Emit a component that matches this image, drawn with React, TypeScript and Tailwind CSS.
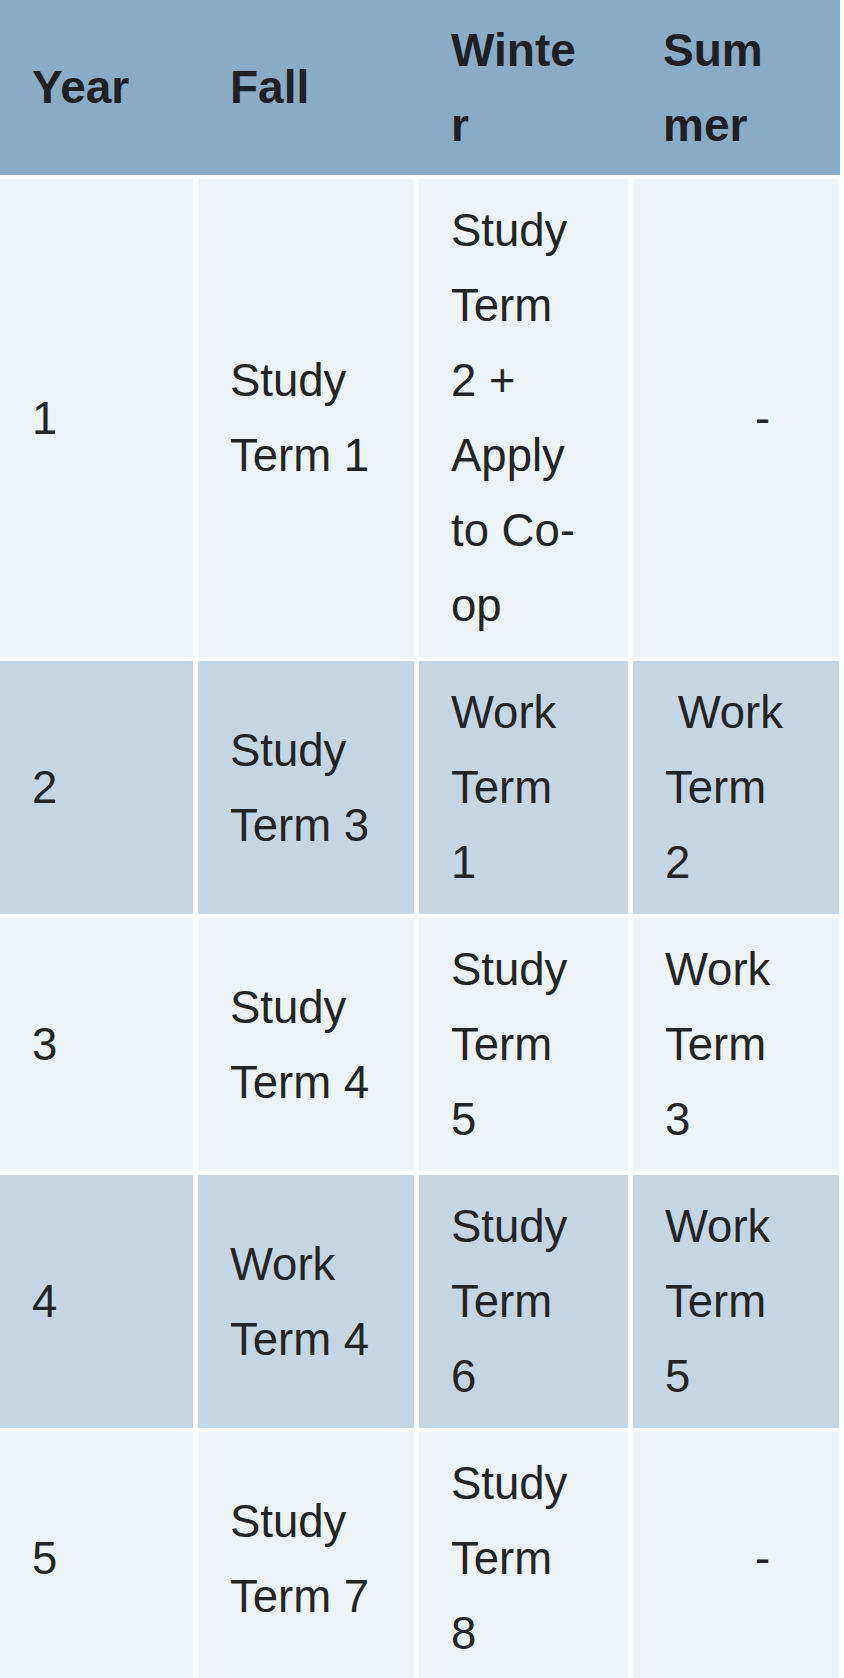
import React from "react";

type Row = { year: string; fall: string[]; winter: string[]; summer: string[] | null; dark: boolean };

const rows: Row[] = [
  { year: "1", fall: ["Study", "Term 1"], winter: ["Study", "Term", "2 +", "Apply", "to Co-", "op"], summer: null, dark: false },
  { year: "2", fall: ["Study", "Term 3"], winter: ["Work", "Term", "1"], summer: ["\u00a0Work", "Term", "2"], dark: true },
  { year: "3", fall: ["Study", "Term 4"], winter: ["Study", "Term", "5"], summer: ["Work", "Term", "3"], dark: false },
  { year: "4", fall: ["Work", "Term 4"], winter: ["Study", "Term", "6"], summer: ["Work", "Term", "5"], dark: true },
  { year: "5", fall: ["Study", "Term 7"], winter: ["Study", "Term", "8"], summer: null, dark: false },
];

function Lines({ lines }: { lines: string[] }) {
  return (
    <div className="flex flex-col">
      {lines.map((l, i) => (
        <span key={i} className="whitespace-pre">{l}</span>
      ))}
    </div>
  );
}

export default function App() {
  return (
    <div
      className="w-[844px] bg-white text-[45.5px] leading-[75px] text-[#222426]"
      style={{ fontFamily: '"Liberation Sans", Arial, sans-serif' }}
    >
      <div className="flex w-[840px] flex-col gap-y-[4px]">
        <div className="grid h-[175px] grid-cols-[193px_216px_209px_206px] gap-x-[5px] bg-[#8aabc6] text-[46px] font-bold text-[#1d2126]">
          <div className="flex items-center pl-[32px]">Year</div>
          <div className="flex items-center pl-[32px]">Fall</div>
          <div className="flex items-center pl-[32px]">
            <Lines lines={["Winte", "r"]} />
          </div>
          <div className="flex items-center pl-[30px]">
            <Lines lines={["Sum", "mer"]} />
          </div>
        </div>
        {rows.map((r) => {
          const bg = r.dark ? "bg-[#c4d6e3]" : "bg-[#eef3f7]";
          return (
            <div key={r.year} className="grid grid-cols-[193px_216px_209px_206px] gap-x-[5px]">
              <div className={`${bg} flex items-center py-[14px] pl-[32px]`}>{r.year}</div>
              <div className={`${bg} flex items-center py-[14px] pl-[32px]`}>
                <Lines lines={r.fall} />
              </div>
              <div className={`${bg} flex items-center py-[14px] pl-[32px]`}>
                <Lines lines={r.winter} />
              </div>
              <div className={`${bg} flex items-center py-[14px] ${r.summer ? "pl-[32px]" : "pl-[122px]"}`}>
                {r.summer ? <Lines lines={r.summer} /> : <span>-</span>}
              </div>
            </div>
          );
        })}
      </div>
    </div>
  );
}
